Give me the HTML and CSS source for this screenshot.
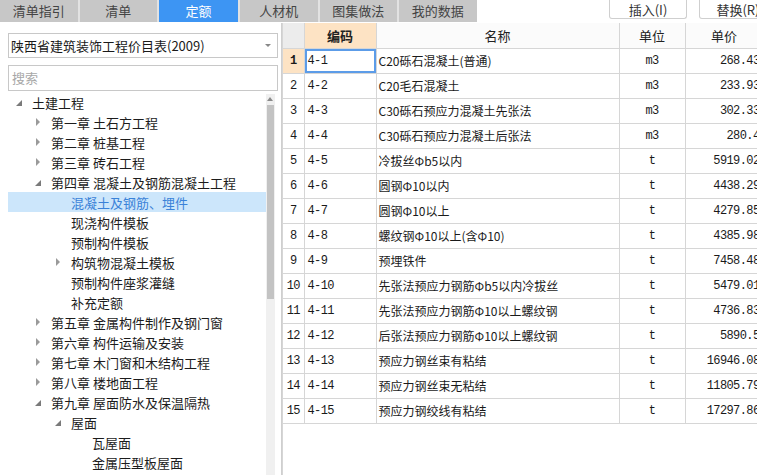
FILE: index.html
```html
<!DOCTYPE html>
<html lang="zh-CN">
<head>
<meta charset="utf-8">
<title>定额</title>
<link rel="stylesheet" href="styles.css">
</head>
<body>
<div class="app">
  <header class="topbar">
    <nav class="tabs">
      <div class="tab">清单指引</div>
      <div class="tab">清单</div>
      <div class="tab active">定额</div>
      <div class="tab">人材机</div>
      <div class="tab">图集做法</div>
      <div class="tab">我的数据</div>
    </nav>
    <div class="actions">
      <button class="btn">插入(I)</button>
      <button class="btn">替换(R)</button>
    </div>
  </header>
  <div class="main">
    <aside class="left">
      <div class="select">
        <span class="select-text">陕西省建筑装饰工程价目表(2009)</span>
        <span class="caret"></span>
      </div>
      <div class="search">搜索</div>
      <div class="treewrap">
        <div class="tree">
          <div class="node l0"><span class="ico open"></span>土建工程</div>
          <div class="node l1"><span class="ico closed"></span>第一章 土石方工程</div>
          <div class="node l1"><span class="ico closed"></span>第二章 桩基工程</div>
          <div class="node l1"><span class="ico closed"></span>第三章 砖石工程</div>
          <div class="node l1"><span class="ico open"></span>第四章 混凝土及钢筋混凝土工程</div>
          <div class="node l2 selected"><span class="ico"></span>混凝土及钢筋、埋件</div>
          <div class="node l2"><span class="ico"></span>现浇构件模板</div>
          <div class="node l2"><span class="ico"></span>预制构件模板</div>
          <div class="node l2"><span class="ico closed"></span>构筑物混凝土模板</div>
          <div class="node l2"><span class="ico"></span>预制构件座浆灌缝</div>
          <div class="node l2"><span class="ico"></span>补充定额</div>
          <div class="node l1"><span class="ico closed"></span>第五章 金属构件制作及钢门窗</div>
          <div class="node l1"><span class="ico closed"></span>第六章 构件运输及安装</div>
          <div class="node l1"><span class="ico closed"></span>第七章 木门窗和木结构工程</div>
          <div class="node l1"><span class="ico closed"></span>第八章 楼地面工程</div>
          <div class="node l1"><span class="ico open"></span>第九章 屋面防水及保温隔热</div>
          <div class="node l2"><span class="ico open"></span>屋面</div>
          <div class="node l3"><span class="ico"></span>瓦屋面</div>
          <div class="node l3"><span class="ico"></span>金属压型板屋面</div>
        </div>
        <div class="scrollbar">
          <span class="arrow-up"></span>
          <span class="thumb"></span>
        </div>
      </div>
    </aside>
    <section class="grid">
      <table class="table">
        <colgroup>
          <col class="c-no"><col class="c-code"><col class="c-name"><col class="c-unit"><col class="c-price">
        </colgroup>
        <thead>
          <tr>
            <th class="h-no"></th>
            <th class="h-code">编码</th>
            <th>名称</th>
            <th>单位</th>
            <th>单价</th>
          </tr>
        </thead>
        <tbody>
          <tr class="cur"><td class="no">1</td><td class="code sel">4-1</td><td class="name">C20砾石混凝土(普通)</td><td class="unit">m3</td><td class="price">268.43</td></tr>
          <tr><td class="no">2</td><td class="code">4-2</td><td class="name">C20毛石混凝土</td><td class="unit">m3</td><td class="price">233.93</td></tr>
          <tr><td class="no">3</td><td class="code">4-3</td><td class="name">C30砾石预应力混凝土先张法</td><td class="unit">m3</td><td class="price">302.33</td></tr>
          <tr><td class="no">4</td><td class="code">4-4</td><td class="name">C30砾石预应力混凝土后张法</td><td class="unit">m3</td><td class="price">280.4</td></tr>
          <tr><td class="no">5</td><td class="code">4-5</td><td class="name">冷拔丝Φb5以内</td><td class="unit">t</td><td class="price">5919.02</td></tr>
          <tr><td class="no">6</td><td class="code">4-6</td><td class="name">圆钢Φ10以内</td><td class="unit">t</td><td class="price">4438.29</td></tr>
          <tr><td class="no">7</td><td class="code">4-7</td><td class="name">圆钢Φ10以上</td><td class="unit">t</td><td class="price">4279.85</td></tr>
          <tr><td class="no">8</td><td class="code">4-8</td><td class="name">螺纹钢Φ10以上(含Φ10)</td><td class="unit">t</td><td class="price">4385.98</td></tr>
          <tr><td class="no">9</td><td class="code">4-9</td><td class="name">预埋铁件</td><td class="unit">t</td><td class="price">7458.48</td></tr>
          <tr><td class="no">10</td><td class="code">4-10</td><td class="name">先张法预应力钢筋Φb5以内冷拔丝</td><td class="unit">t</td><td class="price">5479.01</td></tr>
          <tr><td class="no">11</td><td class="code">4-11</td><td class="name">先张法预应力钢筋Φ10以上螺纹钢</td><td class="unit">t</td><td class="price">4736.83</td></tr>
          <tr><td class="no">12</td><td class="code">4-12</td><td class="name">后张法预应力钢筋Φ10以上螺纹钢</td><td class="unit">t</td><td class="price">5890.5</td></tr>
          <tr><td class="no">13</td><td class="code">4-13</td><td class="name">预应力钢丝束有粘结</td><td class="unit">t</td><td class="price">16946.08</td></tr>
          <tr><td class="no">14</td><td class="code">4-14</td><td class="name">预应力钢丝束无粘结</td><td class="unit">t</td><td class="price">11805.79</td></tr>
          <tr><td class="no">15</td><td class="code">4-15</td><td class="name">预应力钢绞线有粘结</td><td class="unit">t</td><td class="price">17297.86</td></tr>
        </tbody>
      </table>
    </section>
  </div>
</div>
</body>
</html>
```

FILE: styles.css
```css
* { box-sizing: border-box; }
html, body { margin: 0; padding: 0; }
body {
  width: 757px;
  height: 475px;
  overflow: hidden;
  background: #ffffff;
  font-family: "Noto Sans CJK SC", "Noto Sans", sans-serif;
  color: #222;
}
.app { display: flex; flex-direction: column; height: 475px; }

/* top bar */
.topbar {
  display: flex;
  justify-content: space-between;
  height: 23px;
  flex: none;
}
.tabs {
  display: flex;
  gap: 2px;
  background: #e2e2e2;
  height: 22px;
}
.tab {
  width: 77.5px;
  height: 22px;
  background: #c7c7c7;
  color: #444;
  font-size: 13px;
  line-height: 22px;
  text-align: center;
}
.tab.active { background: #3d95f3; color: #fff; width: 79px; }
.actions { display: flex; gap: 12px; margin-right: -20px; }
.btn {
  width: 78px;
  height: 19px;
  margin: 0;
  padding: 0;
  border: 1px solid #cfcfcf;
  border-top: none;
  border-radius: 0 0 3px 3px;
  background: #fff;
  color: #333;
  font-family: inherit;
  font-size: 13px;
  line-height: 17px;
}

/* main */
.main { flex: 1; display: flex; min-height: 0; }
.left {
  width: 282px;
  flex: none;
  border-right: 1px solid #cfcfcf;
  padding: 10px 3px 0 8px;
  display: flex;
  flex-direction: column;
}
.select {
  height: 25px;
  border: 1px solid #c8c8c8;
  display: flex;
  align-items: center;
  justify-content: space-between;
  padding: 0 6px 0 2px;
  font-size: 13px;
  color: #1a1a1a;
}
.caret {
  width: 0; height: 0;
  border-left: 3px solid transparent;
  border-right: 3px solid transparent;
  border-top: 3px solid #888;
}
.search {
  margin-top: 7px;
  height: 26px;
  border: 1px solid #c8c8c8;
  padding-left: 3px;
  font-size: 13px;
  line-height: 24px;
  color: #a8a8a8;
}
.treewrap {
  flex: 1;
  display: flex;
  margin-top: 3px;
  min-height: 0;
}
.tree { width: 258px; margin-top: -2px; }
.node {
  height: 20px;
  display: flex;
  align-items: center;
  font-size: 13px;
  color: #1c1c1c;
  white-space: nowrap;
}
.node.l0 { padding-left: 6px; }
.node.l1 { padding-left: 25px; }
.node.l2 { padding-left: 45px; }
.node.l3 { padding-left: 66px; }
.node.selected { background: #cce6fb; color: #3a82d8; }
.ico { width: 18px; height: 20px; flex: none; position: relative; }
.ico.closed::before {
  content: "";
  position: absolute;
  left: 3px; top: 6px;
  border-left: 4px solid #9a9a9a;
  border-top: 4px solid transparent;
  border-bottom: 4px solid transparent;
}
.ico.open::before {
  content: "";
  position: absolute;
  left: 2px; top: 8px;
  border-bottom: 6px solid #7a7a7a;
  border-left: 6px solid transparent;
}
.scrollbar {
  width: 9px;
  margin-left: 0;
  background: #f0f0f0;
  position: relative;
}
.arrow-up {
  position: absolute;
  left: 1px; top: 3px;
  border-left: 3.5px solid transparent;
  border-right: 3.5px solid transparent;
  border-bottom: 4px solid #8a8a8a;
}
.thumb {
  position: absolute;
  left: 1px; top: 11px;
  width: 7px; height: 194px;
  background: #c3c3c3;
}

/* grid */
.grid { flex: 1; overflow: hidden; border-left: 1px solid #d6d6d6; }
.table {
  border-collapse: collapse;
  table-layout: fixed;
  width: 480px;
}
.c-no { width: 21px; }
.c-code { width: 72px; }
.c-name { width: 243px; }
.c-unit { width: 66px; }
.c-price { width: 78px; }
.table th, .table td {
  height: 25px;
  padding: 0;
  border: 1px solid #d6d6d6;
  white-space: nowrap;
  overflow: hidden;
}
.table tr > :first-child { border-left: none; }
.table th {
  background: #fbfbfb;
  font-weight: normal;
  font-size: 13px;
  color: #222;
  border-top: none;
  height: 25px;
}
.table th.h-no { background: #ececec; }
.table th.h-code { background: #fde3c4; font-weight: bold; }
.table td { font-size: 12px; color: #1a1a1a; }
.no, .code, .unit, .price {
  font-family: "Liberation Mono", "DejaVu Sans Mono", monospace;
  font-size: 11.5px;
  letter-spacing: -0.6px;
}
.no { text-align: center; color: #333; }
.cur .no { background: #fde3c4; font-weight: bold; }
.code { padding-left: 3px !important; }
.code.sel { box-shadow: inset 0 0 0 2px #5c9ce8; }
.name { padding-left: 2px !important; }
.unit { text-align: center; }
.price { text-align: right; padding-right: 3px !important; }
```
